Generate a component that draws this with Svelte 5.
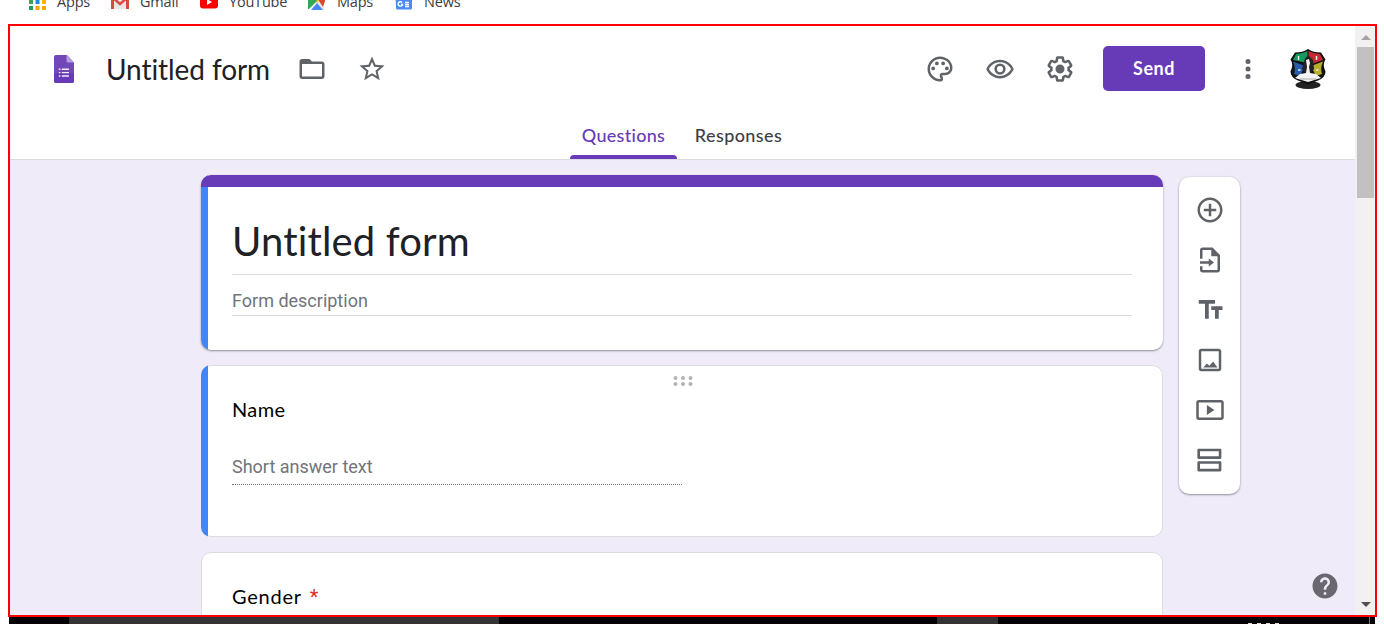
<script>
  const tools = [
    { name: 'add', d: 'M13 7h-2v4H7v2h4v4h2v-4h4v-2h-4V7zm-1-5C6.48 2 2 6.48 2 12s4.48 10 10 10 10-4.48 10-10S17.52 2 12 2zm0 18c-4.41 0-8-3.59-8-8s3.59-8 8-8 8 3.59 8 8-3.59 8-8 8z' },
    { name: 'import', d: 'M14 2H6c-1.1 0-2 .9-2 2v7h2V4h7v5h5v11H6v-3H4v3c0 1.1.9 2 2 2h12c1.1 0 2-.9 2-2V8l-6-6zM4 13v2h7v2.2l4.2-3.2L11 10.8V13H4z' },
    { name: 'title', d: 'M3 4v3h5v12h3V7h5V4H3zm19 5h-9v3h3v7h3v-7h3V9z' },
    { name: 'image', d: 'M19 5v14H5V5h14m0-2H5c-1.1 0-2 .9-2 2v14c0 1.1.9 2 2 2h14c1.1 0 2-.9 2-2V5c0-1.1-.9-2-2-2zm-4.5 10.2l-3 3.4-2-1.900L6.600 18H18l-3.500-4.800z' },
    { name: 'video', d: 'M9.5 8v8l6-4-6-4zM21 4H3c-1.1 0-2 .9-2 2v12c0 1.1.9 2 2 2h18c1.1 0 2-.9 2-2V6c0-1.1-.9-2-2-2zm0 14H3V6h18v12z' },
    { name: 'section', d: 'M19 5v4H4V5h15m1.2-2H2.800c-.5 0-.9.4-.9.9v6.300c0 .5.4.9.9.9h17.400c.5 0 .9-.4.9-.9V3.900c0-.5-.4-.9-.9-.9zM19 15v4H4v-4h15m1.200-2H2.800c-.5 0-.9.4-.9.9v6.300c0 .5.4.9.9.9h17.400c.5 0 .9-.4.9-.9v-6.300c0-.5-.4-.9-.9-.9z' }
  ];
  const actions = [
    { name: 'theme', d: 'M12 22C6.490 22 2 17.510 2 12S6.490 2 12 2s10 4.040 10 9c0 3.310-2.690 6-6 6h-1.770c-.28 0-.5.22-.5.5 0 .12.050.23.130.33.410.47.640 1.060.640 1.670A2.500 2.500 0 0 1 12 22zm0-18c-4.410 0-8 3.590-8 8s3.590 8 8 8c.28 0 .5-.22.5-.5a.54.54 0 0 0-.14-.35c-.41-.46-.63-1.050-.63-1.650a2.500 2.500 0 0 1 2.500-2.500H16c2.210 0 4-1.790 4-4 0-3.860-3.590-7-8-7zM6.500 10a1.500 1.500 0 1 0 0 3 1.500 1.500 0 0 0 0-3zm3-4a1.500 1.500 0 1 0 0 3 1.500 1.500 0 0 0 0-3zm5 0a1.500 1.500 0 1 0 0 3 1.500 1.500 0 0 0 0-3zm3 4a1.500 1.500 0 1 0 0 3 1.500 1.500 0 0 0 0-3z' },
    { name: 'preview', d: 'M12 6.500c3.790 0 7.170 2.130 8.820 5.500-1.650 3.370-5.030 5.500-8.820 5.500S4.830 15.370 3.180 12C4.830 8.630 8.210 6.500 12 6.500m0-2C7 4.500 2.730 7.610 1 12c1.730 4.390 6 7.500 11 7.500s9.270-3.110 11-7.500c-1.730-4.390-6-7.500-11-7.500zm0 5a2.500 2.500 0 1 1 0 5 2.500 2.500 0 0 1 0-5m0-2a4.500 4.500 0 1 0 0 9 4.500 4.500 0 0 0 0-9z' },
    { name: 'settings', d: 'M13.850 22.250h-3.700c-.74 0-1.360-.54-1.450-1.270l-.27-1.890c-.27-.14-.53-.29-.79-.46l-1.800.72c-.7.26-1.470-.03-1.810-.65L2.200 15.530c-.35-.66-.2-1.440.36-1.880l1.530-1.190c-.01-.15-.02-.3-.02-.46 0-.15.010-.31.020-.46l-1.520-1.190c-.59-.45-.74-1.260-.37-1.880l1.850-3.190c.34-.62 1.110-.9 1.790-.63l1.810.73c.26-.17.52-.32.78-.46l.27-1.910c.090-.7.710-1.250 1.440-1.250h3.700c.74 0 1.360.54 1.450 1.270l.27 1.890c.27.14.53.29.79.46l1.800-.72c.71-.26 1.480.03 1.820.65l1.840 3.180c.36.66.2 1.440-.36 1.880l-1.520 1.190c.010.15.020.3.020.46s-.01.31-.02.46l1.520 1.190c.56.45.72 1.230.37 1.860l-1.860 3.220c-.34.62-1.110.9-1.800.63l-1.800-.72c-.26.17-.52.32-.78.46l-.27 1.910c-.1.68-.72 1.220-1.460 1.220zm-3.230-2h2.760l.37-2.550.53-.22c.44-.18.88-.44 1.340-.78l.45-.34 2.380.96 1.380-2.400-2.030-1.580.07-.56c.030-.26.060-.51.060-.78s-.03-.53-.06-.78l-.07-.56 2.030-1.580-1.390-2.400-2.390.96-.45-.35c-.42-.32-.87-.58-1.330-.77l-.52-.22-.37-2.550h-2.760l-.37 2.550-.53.21c-.44.19-.88.44-1.340.79l-.45.33-2.380-.95-1.390 2.390 2.030 1.580-.07.56a7 7 0 0 0 0 1.570l.07.56-2.030 1.580 1.380 2.400 2.390-.96.45.35c.43.33.86.58 1.330.77l.53.22.38 2.550zM12 8.400a3.600 3.600 0 1 0 0 7.200 3.600 3.600 0 0 0 0-7.200z' }
  ];
</script>

<div class="screen">
  <nav class="bookmarks">
    <a class="mark apps"><svg width="18" height="20" viewBox="0 0 18 20"><path fill="#1aa260" d="M0 13h4v4H0z"/><path fill="#ffa400" d="M6.500 13h4v4h-4zM13 13h4v4h-4z"/><path fill="#34a853" d="M0 7h4v4H0z"/><path fill="#1e88e5" d="M6.500 7h4v4h-4z"/><path fill="#fbb300" d="M13 7h4v4h-4z"/></svg><span>Apps</span></a>
    <a class="mark gmail"><svg width="18" height="20" viewBox="0 0 18 20"><path fill="#e8e6e6" d="M0 3h18v13H0z"/><path fill="#d54b3d" d="M0 3h3v13H0zM15 3h3v13h-3z"/><path fill="none" stroke="#e04b43" stroke-width="2.500" d="M1 4l8 7 8-7"/></svg><span>Gmail</span></a>
    <a class="mark youtube"><svg width="18" height="20" viewBox="0 0 18 20"><rect y="2" width="18" height="13.500" rx="3" fill="red"/><path fill="#fff" d="M7 6l5 3-5 3z"/></svg><span>YouTube</span></a>
    <a class="mark maps"><svg width="18" height="20" viewBox="0 0 18 20"><path fill="#35a853" d="M0 2h11L1 15z"/><path fill="#e8e8e8" d="M7 10l3-3 7 9-1 1z"/><path fill="#4688f4" d="M3 17l6-7 6 7z"/><path fill="#fbc02d" d="M7 7l3-3 2 3-3 3z"/><path fill="#35a853" d="M0 5h6l3 3-8 8H0z"/><path fill="#db4437" d="M10 3h7v5l-2 6-4-6z"/></svg><span>Maps</span></a>
    <a class="mark news"><svg width="18" height="20" viewBox="0 0 18 20"><path fill="#ea4335" d="M12 4h6l-2 8z"/><path fill="#fbbc04" d="M0 5h4v6H1z"/><rect x="1" y="6" width="16" height="10.500" rx="1.500" fill="#4b8bf5"/><path fill="none" stroke="#fff" stroke-width="1.300" d="M7 9.500a2.200 2.200 0 1 0 .5 2H6M10 9.500h4M10 11.500h4M10 13.500h4"/></svg><span>News</span></a>
  </nav>

  <main class="frame">
    <div class="app">
      <header>
        <div class="bar">
          <svg class="logo" width="20" height="28" viewBox="0 0 20 28"><path fill="#7248b9" d="M2 0h11l7 7.500V26a2 2 0 0 1-2 2H2a2 2 0 0 1-2-2V2a2 2 0 0 1 2-2z"/><path fill="#673ab7" d="M0 18h20v8a2 2 0 0 1-2 2H2a2 2 0 0 1-2-2z"/><path fill="#b39ddb" d="M12.500 0L20 7.500h-6a1.500 1.500 0 0 1-1.500-1.500z"/><path fill="#f1edf8" d="M4.800 13.500h1.600v1.400H4.800zm3 0H15v1.400H7.800zm-3 3.400h1.600v1.400H4.800zm3 0H15v1.400H7.800zm-3 3.400h1.600v1.400H4.800zm3 0H15v1.400H7.800z"/></svg>
          <span class="doc">Untitled form</span>
          <svg class="icon folder" viewBox="0 0 24 24"><path d="M20 6h-8l-2-2H4c-1.100 0-1.990.9-1.990 2L2 18c0 1.100.9 2 2 2h16c1.100 0 2-.9 2-2V8c0-1.100-.9-2-2-2zm0 12H4V8h16v10z"/></svg>
          <svg class="icon star" viewBox="0 0 24 24"><path d="M22 9.240l-7.190-.62L12 2 9.190 8.630 2 9.240l5.460 4.730L5.820 21 12 17.270 18.180 21l-1.630-7.030L22 9.240zM12 15.400l-3.760 2.270 1-4.280-3.320-2.880 4.380-.38L12 6.100l1.710 4.040 4.380.38-3.320 2.880 1 4.280L12 15.400z"/></svg>
          <div class="actions">
            {#each actions as a (a.name)}
              <svg class="icon {a.name}" viewBox="0 0 24 24"><path d={a.d} /></svg>
            {/each}
          </div>
          <button class="send">Send</button>
          <svg class="icon more" viewBox="0 0 24 24"><circle cx="12" cy="6" r="2"/><circle cx="12" cy="12" r="2"/><circle cx="12" cy="18" r="2"/></svg>
          <svg class="avatar" width="40" height="42" viewBox="0 0 40 42">
            <ellipse cx="20" cy="37" rx="12.500" ry="4" fill="#222"/>
            <path fill="#111" d="M7 4.500q8 0 13-3.500 5 3.500 13 3.500l4.500 7q-3.500 5 0 12 0 6-7.500 9l-10 4-10-4q-7.500-3-7.500-9 3.500-7 0-12z"/>
            <path fill="#159a61" d="M8 6Q15 5.500 19.500 3V15L5 12z"/><path fill="#c92831" d="M20.500 3Q25 5.500 32 6l3 6-14 5z"/>
            <path fill="#275cae" d="M5 13.500l12 4.500-5 10-6-2q2-6-1-12.500z"/><path fill="#b9ad2b" d="M35 13.500L23 18l5 10 6-2q-2-6 1-12.500z"/>
            <path fill="#222" d="M16 13l2-4 3-1 4 4 1 9-4 5h-4l-4-5z"/>
            <path fill="#f4f4f4" d="M18 12l3-1 1 4-1 4 1 6 6 1 5 4-13 4-13-4 5-4 6-1 1-6z"/>
            <path stroke="#e6eee9" stroke-width="1.500" d="M10.500 8v4M28.500 8v4M10 22h2.500M28 22h2.500"/><path stroke="#aaa" d="M12 31h16"/>
          </svg>
        </div>
        <div class="tabs">
          <div class="tab active"><span>Questions</span></div>
          <div class="tab"><span>Responses</span></div>
        </div>
      </header>
      <section class="canvas">
        <div class="cards">
          <article class="card intro selected">
            <h1>Untitled form</h1>
            <p>Form description</p>
          </article>
          <article class="card question selected">
            <svg class="grip" width="20" height="12" viewBox="0 0 20 12"><circle cx="2.500" cy="3" r="2"/><circle cx="10" cy="3" r="2"/><circle cx="17.500" cy="3" r="2"/><circle cx="2.500" cy="9" r="2"/><circle cx="10" cy="9" r="2"/><circle cx="17.500" cy="9" r="2"/></svg>
            <h2 class="name">Name</h2>
            <div class="answer">Short answer text</div>
          </article>
          <article class="card next"><h2 class="gender">Gender<b>*</b></h2></article>
        </div>
        <aside>
          {#each tools as t (t.name)}
            <svg class="icon" viewBox="0 0 24 24"><path d={t.d} /></svg>
          {/each}
        </aside>
        <svg class="help" viewBox="0 0 24 24"><path d="M12 2C6.480 2 2 6.480 2 12s4.480 10 10 10 10-4.480 10-10S17.520 2 12 2zm1 17h-2v-2h2v2zm2.070-7.750l-.9.920C13.450 12.900 13 13.500 13 15h-2v-.5c0-1.100.45-2.100 1.170-2.830l1.240-1.260c.37-.36.59-.86.59-1.410 0-1.100-.9-2-2-2s-2 .9-2 2H8c0-2.210 1.790-4 4-4s4 1.790 4 4c0 .88-.36 1.680-.93 2.250z"/></svg>
      </section>
    </div>
    <div class="scroll">
      <svg width="10" height="5" viewBox="0 0 10 5"><path fill="#a3a3a3" d="M0 5l5-5 5 5z"/></svg>
      <div class="thumb"></div>
      <svg class="down" width="10" height="5" viewBox="0 0 10 5"><path fill="#505050" d="M0 0h10L5 5z"/></svg>
    </div>
  </main>
  <footer><i class="search"></i><i class="task"></i><span class="clock"><em></em><em></em><em></em><em></em></span><i class="edge"></i></footer>
</div>

<style>
  :global(body) { margin: 0; background: #fff; overflow: hidden; }
  * { box-sizing: border-box; }
  .screen { width: 1384px; height: 641px; overflow: hidden; font-family: Lato, sans-serif; font-variant-ligatures: none; }
  .bookmarks { height: 24px; padding-left: 29px; display: flex; overflow: hidden; font: 14.500px/20px "Open Sans", sans-serif; color: #3c4043; }
  .mark { display: flex; height: 20px; margin-top: -7px; }
  .mark span { margin: -1px 0 0 10px; white-space: nowrap; letter-spacing: -.2px; }
  .mark svg { flex: none; }
  .apps { width: 82px; } .gmail { width: 89px; } .youtube { width: 108px; } .maps { width: 87px; }
  .gmail span, .youtube span, .maps span, .news span { margin-left: 11px; }

  .frame { width: 1369px; height: 593px; margin-left: 8px; border: 2px solid red; display: flex; overflow: hidden; }
  .app { width: 1345px; height: 589px; overflow: hidden; }
  header { height: 134px; background: #fff; border-bottom: 1px solid #dadce0; }
  .bar { height: 86px; padding-left: 44px; display: flex; align-items: center; }
  .doc { width: 164px; margin-left: 32px; font-size: 28px; line-height: 40px; letter-spacing: -.08px; white-space: nowrap; color: #202124; }
  .icon { width: 30px; height: 30px; fill: #5f6368; flex: none; display: block; }
  .folder { margin-left: 27px; } .star { margin-left: 30px; }
  .actions { display: flex; gap: 30px; margin-left: 538px; }
  .send { width: 102px; height: 45px; margin-left: 28px; margin-top: -1px; padding: 0 0 2px; border: 0; border-radius: 5px; background: #673ab7; color: #fff; font: 700 18px Lato, sans-serif; letter-spacing: .5px; }
  .more { margin-left: 28px; }
  .avatar { margin-left: 25px; flex: none; }
  .tabs { height: 47px; padding-left: 560px; display: flex; }
  .tab { position: relative; width: 107px; text-align: center; font-size: 18px; font-weight: 500; line-height: 47px; letter-spacing: .3px; color: #3c4043; }
  .tab + .tab { margin-left: 8px; letter-spacing: .4px; }
  .active { color: #673ab7; }
  .active::after { content: ""; position: absolute; left: 0; bottom: 0; width: 107px; height: 4px; border-radius: 4px 4px 0 0; background: #673ab7; }

  .canvas { position: relative; height: 455px; padding: 15px 0 0 191px; background: #efebf9; display: flex; align-items: flex-start; }
  .cards { width: 962px; display: flex; flex-direction: column; gap: 15px; }
  .card { position: relative; background: #fff; border: 1px solid #dadce0; border-radius: 10px; overflow: hidden; padding-left: 30px; }
  .selected::before { content: ""; position: absolute; left: 0; top: 0; bottom: 0; width: 7px; background: #4285f4; }
  .intro { height: 175px; border: 0; padding: 12px 31px 0; box-shadow: 0 1px 2px rgba(60,64,67,.55); }
  .intro::after { content: ""; position: absolute; inset: 0 0 auto; height: 12px; background: #673ab7; }
  h1 { margin: 28px 0 0; width: 900px; height: 60px; border-bottom: 1px solid #dadce0; font-weight: 400; font-size: 40px; line-height: 52px; letter-spacing: .15px; color: #202124; }
  p { margin: 14px 0 0; width: 900px; height: 27px; border-bottom: 1px solid #dadce0; font: 18px/23px Roboto, sans-serif; color: #70757a; }
  .question { height: 172px; border: 0; padding: 1px 0 0 31px; box-shadow: inset 0 0 0 1px #dadce0; }
  .grip { display: block; margin: 9px 0 0 441px; fill: #b4b4b4; }
  h2 { margin: 0; font-size: 20px; font-weight: 400; line-height: 30px; color: #000; }
  .name { margin-top: 7px; letter-spacing: .4px; }
  .answer { width: 450px; height: 35px; margin-top: 26px; border-bottom: 1px dotted #777; font: 18px/33px Roboto, sans-serif; color: #70757a; }
  .next { height: 190px; }
  .gender { padding-top: 28px; letter-spacing: .75px; }
  b { margin-left: 8px; font: 400 20px/20px Roboto, sans-serif; color: #d93025; }
  aside { width: 61px; height: 317px; margin: 2px 0 0 16px; padding: 18px 0 0 1px; display: flex; flex-direction: column; align-items: center; gap: 20px; background: #fff; border-radius: 10px; box-shadow: 0 1px 2px rgba(60,64,67,.5), 0 0 2px rgba(60,64,67,.15); }
  .help { position: absolute; right: 15px; bottom: 14px; width: 30px; height: 30px; fill: #6b6770; }
  .scroll { width: 20px; height: 589px; padding: 9px 0 0 2px; background: #f1f1f1; display: flex; flex-direction: column; }
  .scroll svg { margin-left: 4px; flex: none; }
  .thumb { width: 17px; height: 151px; margin-top: 7px; background: #c1c1c1; }
  .scroll .down { margin-top: auto; margin-bottom: 8px; }
  footer { width: 1366px; height: 7px; margin-left: 9px; background: #000; display: flex; overflow: hidden; }
  i { height: 7px; }
  .search { width: 430px; margin-left: 60px; background: #333; }
  .task { width: 61px; margin-left: 438px; background: #333; }
  .clock { display: flex; gap: 5px; width: 34px; margin-left: 250px; padding-top: 6px; }
  em { width: 4px; height: 1px; background: #ddd; }
  .edge { width: 1px; margin-left: 87px; background: #777; }
</style>
